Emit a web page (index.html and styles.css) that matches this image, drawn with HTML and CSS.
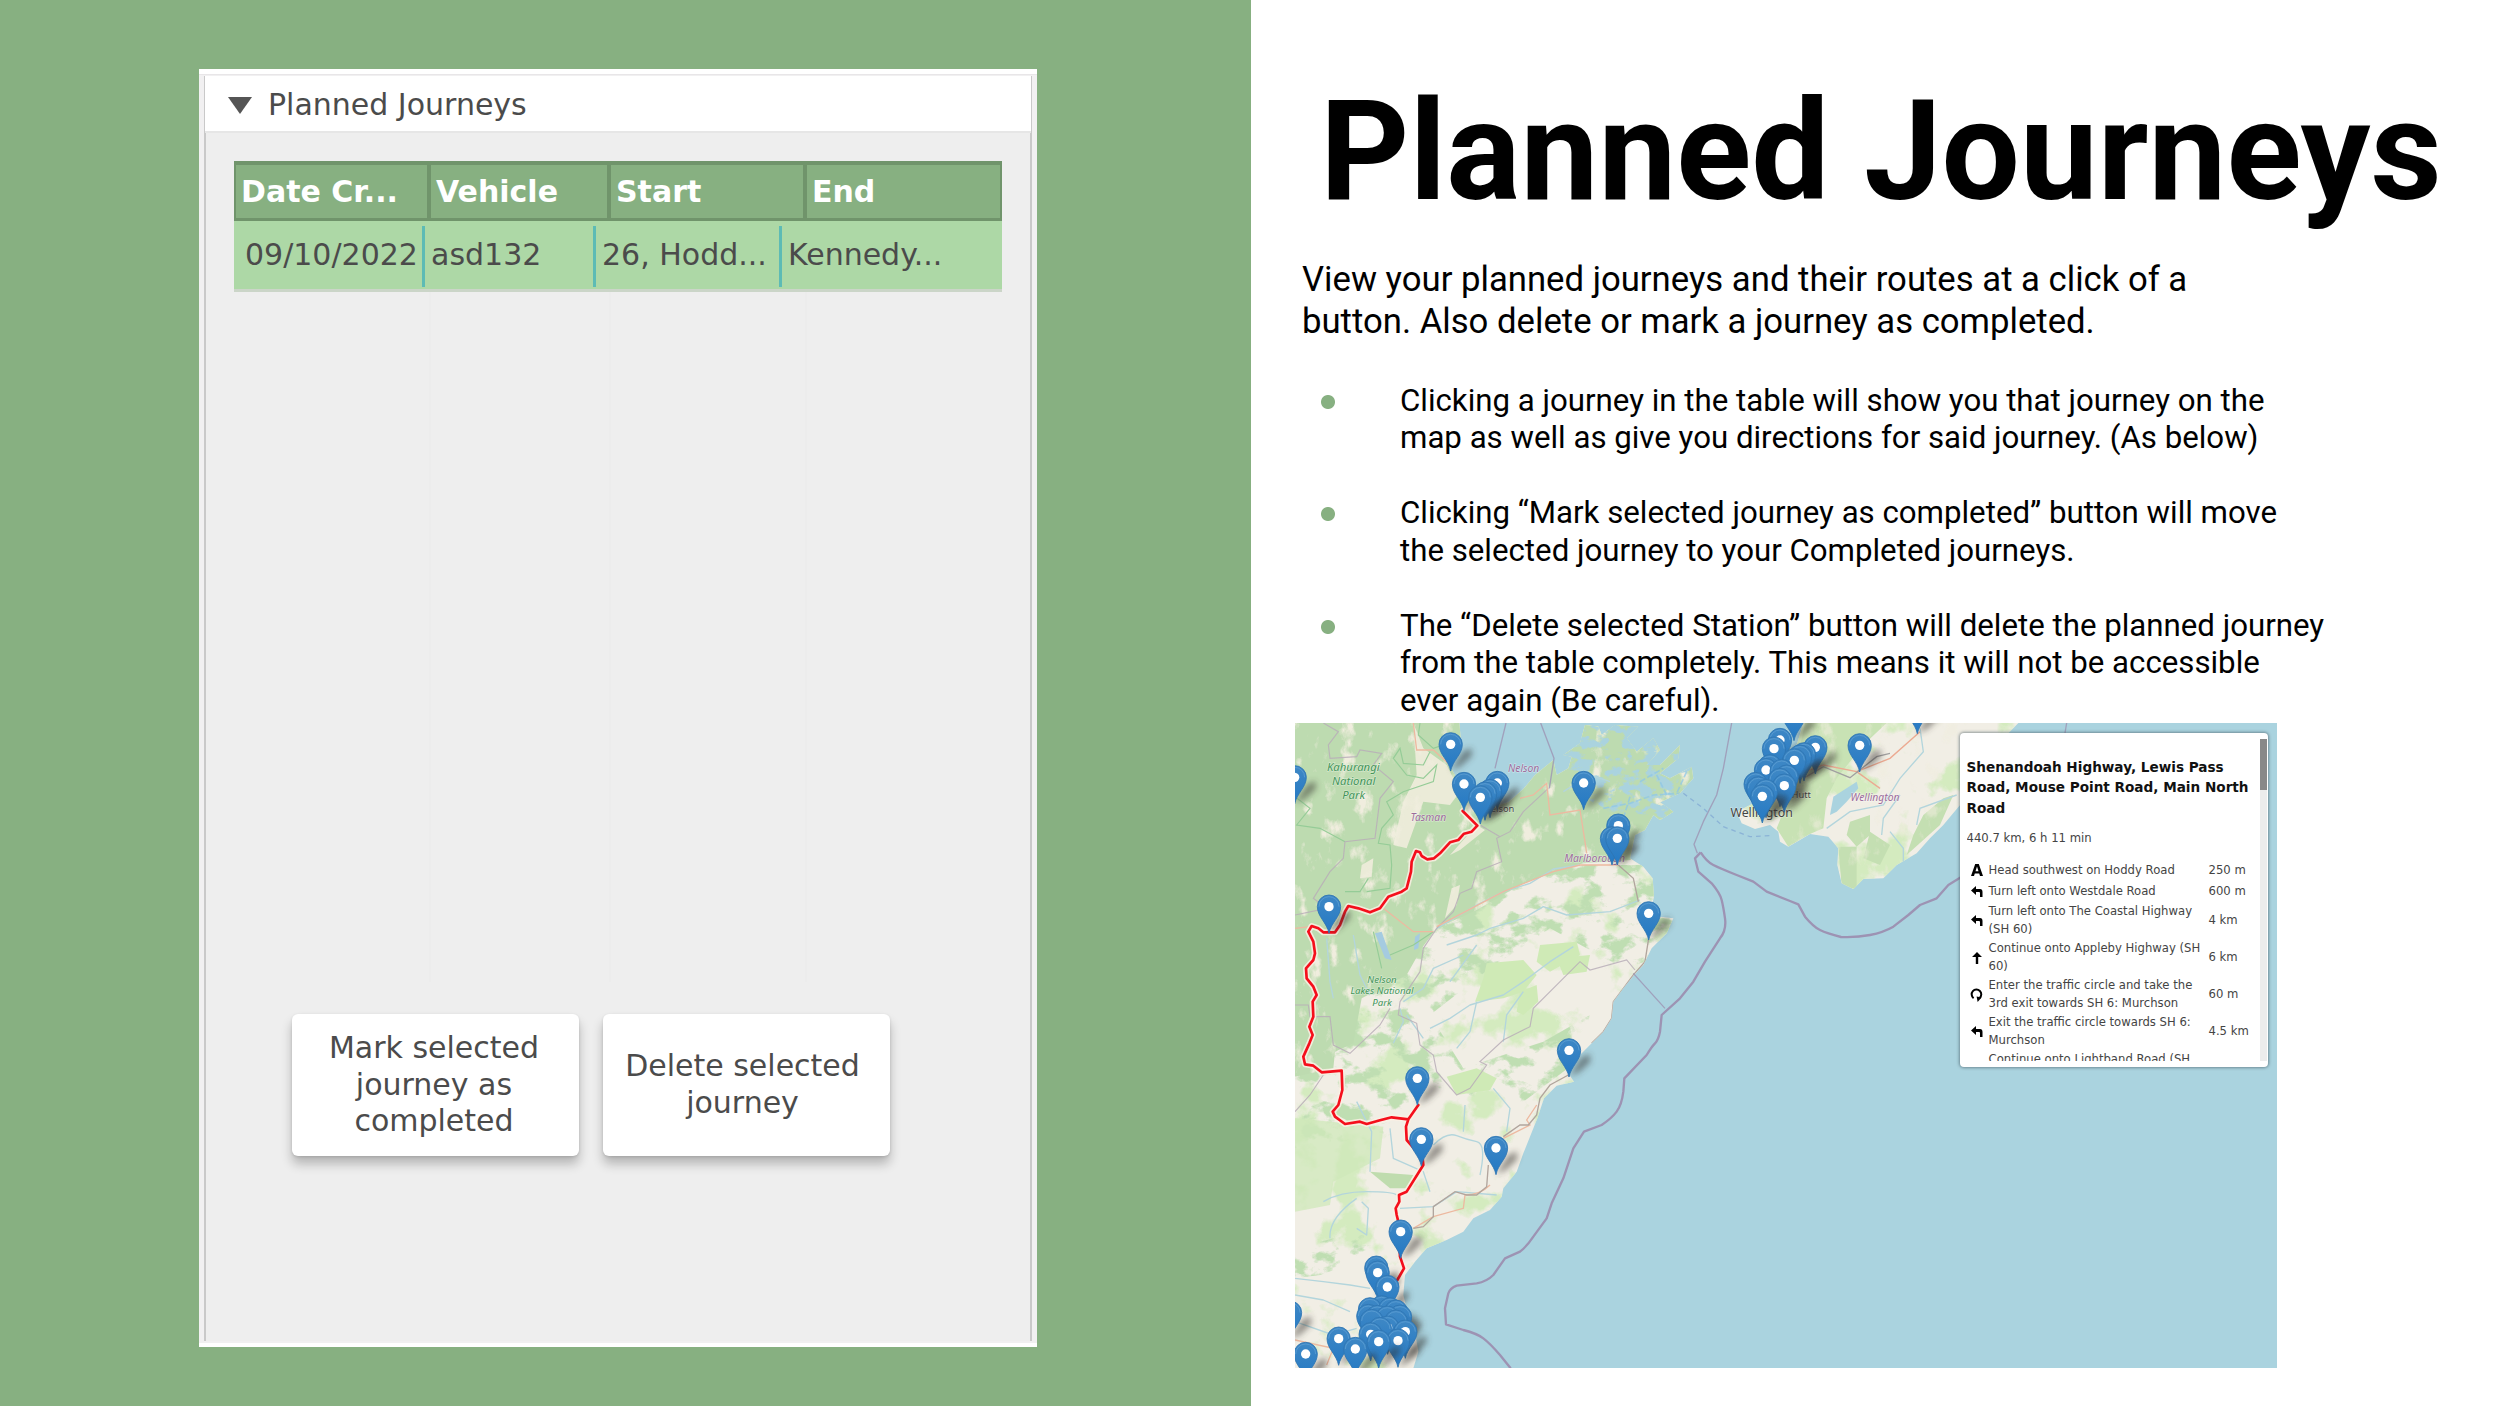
FILE: index.html
```html
<!DOCTYPE html>
<html lang="en">
<head>
<meta charset="utf-8">
<title>Planned Journeys</title>
<link rel="stylesheet" href="styles.css">
</head>
<body>
<main class="slide">
  <section class="left">
    <div class="panel">
      <div class="panel-inner">
        <header class="panel-head"><span class="caret"></span>Planned Journeys</header>
        <div class="panel-body">
          <div class="table">
            <div class="thead"><span>Date Cr...</span><span>Vehicle</span><span>Start</span><span>End</span></div>
            <div class="trow"><span>09/10/2022</span><span>asd132</span><span>26, Hodd...</span><span>Kennedy...</span></div>
            <div class="tempty"><i></i><i></i><i></i><i></i></div>
          </div>
          <div class="buttons">
            <button>Mark selected<br>journey as<br>completed</button>
            <button>Delete selected<br>journey</button>
          </div>
        </div>
      </div>
    </div>
  </section>
  <section class="right">
    <h1>Planned Journeys</h1>
    <p class="lead">View your planned journeys and their routes at a click of a<br>button. Also delete or mark a journey as completed.</p>
    <ul class="points">
      <li>Clicking a journey in the table will show you that journey on the<br>map as well as give you directions for said journey. (As below)</li>
      <li>Clicking “Mark selected journey as completed” button will move<br>the selected journey to your Completed journeys.</li>
      <li>The “Delete selected Station” button will delete the planned journey<br>from the table completely. This means it will not be accessible<br>ever again (Be careful).</li>
    </ul>
    <div class="map">
      <svg class="map-art" viewBox="15 24 2946 1935" preserveAspectRatio="none">
        <defs>
          <path id="south" d="M15 24H508L512 70 490 100 478 150 500 190 540 225 570 262 610 275 655 262 700 222 735 180 790 135 800 180 835 160 845 125 820 120 870 85 885 30 925 35 935 60 975 30 1045 35 1010 70 1040 110 1090 70 1110 105 1070 150 1110 150 1170 90 1165 130 1110 175 1140 190 1205 155 1210 190 1170 235 1110 262 1150 290 1110 315 1090 300 1065 345 1035 360 1020 430 1060 455 1088 490 1092 545 1085 575 1110 605 1150 610 1130 655 1085 700 1060 750 1032 780 1000 820 970 860 965 910 940 950 905 985 870 1020 835 1075 852 1100 800 1112 762 1150 742 1210 722 1260 700 1315 680 1370 640 1420 635 1445 600 1485 550 1510 520 1550 470 1575 410 1600 375 1640 345 1680 340 1740 352 1790 375 1850 385 1910 370 1960H15Z"/>
          <path id="north" d="M1540 24 1520 90 1480 140 1430 200 1400 260 1340 290 1355 325 1395 342 1440 330 1465 350 1470 380 1495 395 1560 357 1615 365 1645 400 1642 450 1655 505 1690 522 1720 492 1780 490 1820 450 1880 415 1920 370 1960 330 2010 270 2060 180 2150 60 2185 24Z"/>
          <clipPath id="cs"><use href="#south"/></clipPath>
          <clipPath id="cn"><use href="#north"/></clipPath>
          <clipPath id="forestClip"><path d="M15 24H1210V300L1020 435 880 445 790 470 690 510 560 585 440 640 395 700 350 780 215 850 190 985 135 1010 130 1060 15 1085Z"/></clipPath>
          <filter id="cream" x="0" y="0" width="100%" height="100%" color-interpolation-filters="sRGB"><feTurbulence type="fractalNoise" baseFrequency=".02 .013" numOctaves="5" seed="4"/><feColorMatrix values="0 0 0 0 .94  0 0 0 0 .93  0 0 0 0 .87  5 0 0 0 -2.95"/><feComposite in2="SourceGraphic" operator="in"/></filter>
          <filter id="green" x="0" y="0" width="100%" height="100%" color-interpolation-filters="sRGB"><feTurbulence type="fractalNoise" baseFrequency=".014 .018" numOctaves="5" seed="11"/><feColorMatrix values="0 0 0 0 .75  0 0 0 0 .87  0 0 0 0 .70  8 0 0 0 -4.1"/><feComposite in2="SourceGraphic" operator="in"/></filter>
          <filter id="lime" x="0" y="0" width="100%" height="100%" color-interpolation-filters="sRGB"><feTurbulence type="fractalNoise" baseFrequency=".008" numOctaves="5" seed="27"/><feColorMatrix values="0 0 0 0 .83  0 0 0 0 .92  0 0 0 0 .75  8 0 0 0 -4.4"/><feComposite in2="SourceGraphic" operator="in"/></filter>
          <filter id="shoal" x="0" y="0" width="100%" height="100%" color-interpolation-filters="sRGB"><feTurbulence type="fractalNoise" baseFrequency=".02 .03" numOctaves="4" seed="9"/><feColorMatrix values="0 0 0 0 .667  0 0 0 0 .827  0 0 0 0 .875  10 0 0 0 -4.9"/><feComposite in2="SourceGraphic" operator="in"/></filter>
          <filter id="soft" x="-60%" y="-60%" width="220%" height="220%"><feGaussianBlur stdDeviation="9"/></filter>
          <linearGradient id="pg" x1="0" y1="0" x2="0" y2="1"><stop offset="0" stop-color="#3f88c5"/><stop offset="1" stop-color="#2479c4"/></linearGradient>
          <g id="blank">
            <path d="M0 78 36 22 62 10 64 34 30 66Z" fill="#332e2a" opacity=".5" filter="url(#soft)"/>
            <path d="M0 80C-6 48-35 30-35 0A35 35 0 0 1 35 0C35 30 6 48 0 80Z" fill="url(#pg)" stroke="#2e75b2" stroke-width="2.5"/>
            <path d="M-30 0A30 30 0 0 1 30 0" fill="none" stroke="#5c9dd2" stroke-width="2.5"/>
          </g>
          <g id="pin"><use href="#blank"/><circle r="14" fill="#fff"/></g>
          <path id="route" d="M518 288 562 332 545 350 522 356 505 375 480 382 450 415 432 430 412 433 395 423 390 412 378 408 365 440 363 470 350 520 335 530 295 545 270 580 240 592 205 580 175 573 165 590 150 630 135 652 100 652 85 640 65 633 55 650 70 680 75 715 70 735 48 760 50 790 70 815 80 840 68 860 70 905 58 935 68 960 58 985 40 1025 45 1048 70 1052 95 1072 155 1067 157 1125 145 1170 128 1190 135 1205 165 1227 210 1220 230 1227 270 1216 305 1207 355 1213 385 1170M355 1213 348 1235 350 1275 398 1330 400 1350 350 1430 327 1440 328 1460 317 1480 320 1500 325 1520 330 1625 342 1660 322 1695"/>
        </defs>
        <rect x="15" y="24" width="2946" height="1935" fill="#aad3df"/>
        <use href="#south" fill="#f1eee5"/>
        <use href="#north" fill="#f1eee5"/>
        <g clip-path="url(#cs)">
          <rect x="15" y="24" width="1200" height="1935" filter="url(#lime)"/>
          <path d="M15 450H1200V700L1000 760 780 640 600 760 420 900 520 1060 760 980 900 900 860 1040 700 1160 430 1130 300 1200 300 1260 15 1300Z" filter="url(#green)"/>
          <path d="M15 1210 280 1235 270 1330 130 1400 120 1470 15 1490Z" fill="#cfe8b9" opacity=".75"/>
          <path d="M15 1600 130 1570 220 1560 260 1600 200 1640 90 1680 15 1690Z" fill="#c7e3b4" filter="url(#green)"/>
          <path d="M590 745 700 735 740 780 700 830 640 850 555 860 580 790ZM750 690 860 680 870 720 780 770 740 740ZM800 730 900 720 890 770 820 780ZM690 830 740 810 745 860 700 900 680 890ZM470 1085 560 1060 620 1090 600 1125 500 1140Z" fill="#cfeab6"/>
          <g clip-path="url(#forestClip)">
            <rect x="15" y="24" width="1200" height="1080" fill="#bddbb0"/>
            <path d="M370 24 400 100 470 150 510 230 480 270 400 260 350 400 310 390 340 260 380 180ZM560 330 585 345 510 405 480 420ZM215 450 250 430 245 485 210 490ZM485 520 510 510 500 570 465 610Z" fill="#ebebd8"/>
            <rect x="15" y="24" width="1200" height="1080" filter="url(#cream)"/>
            <path d="M790 24H1215V330L1080 300 960 290 800 200Z" filter="url(#shoal)"/>
          </g>
          <path d="M240 1370 370 1380 350 1420 300 1420Z" fill="#bfdcae"/>
          <path d="M255 655 275 650 305 735 285 730ZM375 665 390 655 385 700 372 705Z" fill="#a5cbe0"/>
          <g fill="none" stroke="#b3d5dc" stroke-width="4" stroke-linejoin="round">
            <path d="M440 640 560 570 640 530 720 505 790 462 870 450"/>
            <path d="M470 690 560 660 600 640 700 610 760 575 830 600 960 590 1050 555M480 800 560 690M340 860 400 820 430 760 520 720M560 860 540 950 500 1000M420 940 480 910 540 870 640 840 700 800 780 740 850 695M640 980 650 900 700 830M330 880 340 920 310 985M350 900 400 970"/>
            <path d="M240 1370 245 1250 200 1160M300 1240 310 1330 400 1370 420 1430M430 1290 Q470 1250 500 1262T560 1280 570 1380M525 1170 520 1250M330 1480 430 1475 500 1430 620 1440M100 1460 Q150 1430 230 1430T320 1440M120 1570 Q115 1510 200 1450M215 1460 235 1480 230 1560 200 1540M15 1690 100 1700 180 1710 240 1720M15 1740 100 1755 180 1790M15 1820 130 1860 200 1840M610 1120 660 1180 650 1250"/>
            <path d="M110 670 120 800 130 850M190 660 210 780 240 840M700 180 710 210M820 230 900 180 960 200"/>
          </g>
          <g fill="none" stroke="#95cc97" stroke-width="3.5"><path d="M420 110 400 150 340 145 330 100 310 130 350 180 400 190 440 150 430 200 340 230 290 260 310 300 275 340 265 385 300 390 305 450 300 520 230 530 M15 245 60 280 20 330 90 340 165 380M390 24 385 60 430 100 490 80M235 490 210 530 165 530M250 650 275 760M300 720 370 690 430 650"/></g>
          <g fill="none" stroke="#8fc7e5" stroke-width="5" stroke-dasharray="18 7" opacity=".75"><path d="M940 280 1020 265 1090 240 1170 235M1020 245 1000 310M1050 200 1120 160M1130 240 1100 180M1190 170 1160 235"/></g>
          <g fill="none" stroke="#b9aeb8" stroke-width="3.5" opacity=".85">
            <path d="M100 24 145 50 115 90 120 130 200 125 210 105 275 115 250 150 310 200 270 250 255 370 165 380 160 430 120 470 70 550 110 580 15 600"/>
            <path d="M775 220 700 290 660 350 620 370 635 440 560 470 545 520 510 535 490 590 440 640 400 700 390 770 330 860 325 900 380 925 390 990 430 1020 440 1070 500 1140 540 1120 590 1050 570 1040 640 975 720 935 730 880 870 740 900 765 1010 735 1035 765"/>
            <path d="M570 330 630 365M15 870 55 870 60 905 120 905 130 990 180 1015 270 930 300 880M15 1190 60 1140 100 1080"/>
          </g>
          <g fill="none" stroke="#edb9a0" stroke-width="4">
            <path d="M370 24 380 105 430 105 480 150M690 250 730 240 770 205 780 300 870 285 885 380 890 415M985 450 870 450 790 470 640 530 440 635M280 580 370 650 430 650M15 640 60 635M15 1875 130 1900 110 1950"/>
            <path d="M740 1170 710 1215 720 1230 640 1270M600 1410 Q570 1440 525 1440 L520 1480 430 1505 370 1540"/>
          </g>
          <path d="M985 450 1030 490 1045 560M1076 670 1065 740 1030 780 1000 820 970 860 965 910 940 950 905 985M835 1080 780 1110 750 1150 740 1200 715 1230 690 1230 640 1265M595 1350 590 1415 560 1440 530 1440 495 1430 430 1475 430 1505 400 1535 370 1540" fill="none" stroke="#b1a59d" stroke-width="4"/>
        </g>
        <g clip-path="url(#cn)">
          <rect x="1300" y="24" width="900" height="500" filter="url(#lime)"/>
          <path d="M1545 24 1790 24 1720 90 1640 190 1610 250 1600 340 1560 357 1495 395 1460 340 1500 240Z" fill="#c8e2b4"/>
          <path d="M1645 395 1700 395 1700 522 1655 515ZM1680 320 1740 300 1740 360 1700 395 1670 360ZM1900 300 1960 250 1990 240 1950 330 1850 420 1870 360ZM1740 350 1800 390 1770 450 1720 430Z" fill="#c4dfb2"/>
          <rect x="1500" y="24" width="650" height="450" filter="url(#cream)" opacity=".6"/>
          <path d="M1620 300 1630 245 1700 200 1705 220 1670 260 1640 290Z" fill="#aad3df"/>
          <g fill="none" stroke="#b3d5dc" stroke-width="4"><path d="M1610 340 1680 290 1780 270 1830 190 1900 110 1890 40M1775 360 1780 310 1830 240M1880 330 1890 280 2000 240M1800 350 1840 400 1840 440"/></g>
          <path d="M1520 180 1600 150 1700 170 1770 220M1700 170 1800 130 1890 50" fill="none" stroke="#ecaa92" stroke-width="4"/>
          <path d="M1540 190 1600 155 1680 188 1760 125 1800 115" fill="none" stroke="#a1a0a0" stroke-width="4"/>
        </g>
        <g fill="none" stroke="#9d93b3" stroke-linejoin="round">
          <path d="M648 24 615 160M752 24 792 130 778 220M1325 24 1300 160 1280 240 1240 320 1212 388 1222 415M1030 775 1125 880M2330 24 2324 60" stroke-width="4" opacity=".8"/>
          <path d="M1232 412 1215 430 1225 470 1265 505Q1290 535 1295 555T1305 610 1290 670L1245 740 1210 800 1170 850 1115 900 1110 950Q1105 975 1095 985T1070 1020L1003 1090 1000 1130Q995 1170 980 1190T935 1230L882 1250 850 1300 820 1390 785 1465 770 1510 730 1565Q710 1595 690 1610L645 1630 610 1680Q590 1700 560 1705L500 1712Q480 1720 475 1735L465 1780 468 1828 520 1845Q560 1855 580 1870T630 1920L662 1960M1232 412Q1250 440 1270 450T1340 480L1390 500 1430 530 1500 558 1525 568 1545 605Q1570 635 1590 645T1653 666Q1700 668 1740 660T1810 635L1855 600 1890 570 1940 550 1975 510 2015 485" stroke-width="7"/>
          <path d="M1180 235 1240 280 1300 335 1380 365 1440 362" stroke="#8bb3d6" stroke-width="4" stroke-dasharray="14 12"/>
        </g>
        <g class="places">
          <g fill="#429458" font-size="34"><text x="190" y="167">Kahurangi</text><text x="191" y="209">National</text><text x="191" y="251">Park</text></g>
          <g fill="#429458" font-size="29"><text x="276" y="803">Nelson</text><text x="276" y="838">Lakes National</text><text x="276" y="872">Park</text></g>
          <g fill="#9c6c9b" font-size="31"><text x="701" y="170">Nelson</text><text x="415" y="318">Tasman</text><text x="914" y="442">Marlborough</text><text x="1755" y="258">Wellington</text></g>
          <g class="town" fill="#444"><text x="627" y="291" font-size="28">Nelson</text><text x="1415" y="307" font-size="37">Wellington</text><text x="1490" y="249" font-size="28">Lower Hutt</text></g>
        </g>
        <g fill="none" stroke-linejoin="round" stroke-linecap="round">
          <use href="#route" stroke="#faf0e4" stroke-width="18" opacity=".85"/>
          <use href="#route" stroke="#f50f1c" stroke-width="8"/>
        </g>
        <g>
          <use href="#pin" x="482" y="88"/><use href="#pin" x="14" y="187"/><use href="#pin" x="622" y="204"/><use href="#pin" x="881" y="204"/><use href="#pin" x="522" y="207"/><use href="#blank" x="600" y="228"/><use href="#blank" x="585" y="236"/><use href="#pin" x="571" y="247"/>
          <use href="#pin" x="985" y="332"/><use href="#blank" x="966" y="370"/><use href="#pin" x="982" y="370"/><use href="#pin" x="117" y="575"/><use href="#pin" x="1076" y="595"/>
          <use href="#blank" x="1512" y="-3"/><use href="#blank" x="1882" y="-24"/><use href="#pin" x="1709" y="91"/>
          <use href="#pin" x="1470" y="75"/><use href="#pin" x="1576" y="97"/><use href="#pin" x="1452" y="101"/><use href="#blank" x="1542" y="118"/><use href="#blank" x="1530" y="125"/><use href="#pin" x="1513" y="136"/><use href="#blank" x="1440" y="154"/><use href="#pin" x="1428" y="165"/><use href="#blank" x="1475" y="168"/><use href="#blank" x="1490" y="185"/><use href="#blank" x="1470" y="195"/><use href="#blank" x="1397" y="207"/><use href="#pin" x="1483" y="212"/><use href="#blank" x="1405" y="220"/><use href="#blank" x="1428" y="228"/><use href="#pin" x="1417" y="244"/>
          <use href="#pin" x="837" y="1006"/><use href="#pin" x="382" y="1090"/><use href="#pin" x="394" y="1273"/><use href="#pin" x="618" y="1299"/><use href="#pin" x="332" y="1550"/><use href="#blank" x="259" y="1658"/><use href="#pin" x="263" y="1673"/><use href="#pin" x="292" y="1716"/>
          <use href="#blank" x="0" y="1793"/><use href="#blank" x="275" y="1777"/><use href="#blank" x="240" y="1783"/><use href="#blank" x="300" y="1783"/><use href="#blank" x="318" y="1790"/><use href="#blank" x="235" y="1803"/><use href="#blank" x="330" y="1805"/><use href="#blank" x="262" y="1806"/><use href="#blank" x="292" y="1808"/><use href="#blank" x="245" y="1818"/><use href="#blank" x="318" y="1820"/><use href="#pin" x="293" y="1838"/><use href="#blank" x="270" y="1842"/><use href="#pin" x="346" y="1850"/><use href="#pin" x="242" y="1858"/><use href="#pin" x="146" y="1871"/><use href="#pin" x="324" y="1877"/><use href="#pin" x="266" y="1880"/><use href="#pin" x="196" y="1902"/><use href="#pin" x="47" y="1917"/>
        </g>
      </svg>
      <aside class="directions">
        <div class="scroll">
          <h2>Shenandoah Highway, Lewis Pass<br>Road, Mouse Point Road, Main North<br>Road</h2>
          <h3>440.7 km, 6 h 11 min</h3>
          <div class="step"><svg viewBox="0 0 12 12"><path fill-rule="evenodd" d="M0 12 4.2 0H7.8L12 12H9L8.2 9.4H3.8L3 12ZM4.5 7.2H7.5L6 2.4Z"/></svg><span>Head southwest on Hoddy Road</span><b>250 m</b></div>
          <div class="step"><svg viewBox="0 0 12 12"><path d="M0 4.5 5 0V3H9Q11.5 3 11.5 6V11H9V7Q9 6 8 6H5V9Z"/></svg><span>Turn left onto Westdale Road</span><b>600 m</b></div>
          <div class="step"><svg viewBox="0 0 12 12"><path d="M0 4.5 5 0V3H9Q11.5 3 11.5 6V11H9V7Q9 6 8 6H5V9Z"/></svg><span>Turn left onto The Coastal Highway<br>(SH 60)</span><b>4 km</b></div>
          <div class="step"><svg viewBox="0 0 12 12"><path d="M6 0 11 5H7.2V12H4.8V5H1Z"/></svg><span>Continue onto Appleby Highway (SH<br>60)</span><b>6 km</b></div>
          <div class="step"><svg viewBox="0 0 12 12"><path d="M2.6 9.2A4.8 4.8 0 1 1 8.6 9" fill="none" stroke="#000" stroke-width="2"/><path d="M5.6 7.4 10.6 8.4 6.6 13Z"/></svg><span>Enter the traffic circle and take the<br>3rd exit towards SH 6: Murchson</span><b>60 m</b></div>
          <div class="step"><svg viewBox="0 0 12 12"><path d="M0 4.5 5 0V3H9Q11.5 3 11.5 6V11H9V7Q9 6 8 6H5V9Z"/></svg><span>Exit the traffic circle towards SH 6:<br>Murchson</span><b>4.5 km</b></div>
          <div class="step last"><svg viewBox="0 0 12 12"><path d="M6 0 11 5H7.2V12H4.8V5H1Z"/></svg><span>Continue onto Lightband Road (SH</span></div>
        </div>
        <div class="track"><div class="thumb"></div></div>
      </aside>
    </div>
  </section>
</main>
</body>
</html>
```
FILE: styles.css
```css
* { box-sizing: border-box; }
body { margin: 0; background: #fff; }
.slide { display: flex; width: 2500px; height: 1406px; overflow: hidden; }

.left { flex: none; width: 1251px; background: #87b081; padding: 69px 0 0 199px; }
.panel { width: 838px; height: 1278px; background: #f1f0f1; padding: 2px 5px 6px; border-top: 5px solid #fff; border-bottom: 4px solid #fff; box-shadow: inset 0 1px #e8e6e8; font: 30px/36.7px "DejaVu Sans", sans-serif; color: #4b4b4b; }
.panel-inner { height: 1265px; border: 2px solid #c9c9c9; border-top: 0; border-bottom: 0; background: #eee; }
.panel-head { height: 57px; margin: 0 -1px; background: #fff; border-bottom: 2px solid #e6e6e6; display: flex; align-items: center; padding: 4px 0 0 23px; }
.caret { width: 24px; height: 17px; background: #555; clip-path: polygon(0 0, 100% 0, 50% 100%); margin-right: 16px; }
.panel-body { padding: 28px 28px 0; }
.table { width: 768px; }
.thead { display: grid; grid-template-columns: 191px 180px 196px 197px; height: 60px; background: #87b081; border: 3px solid #70946b; border-width: 4px 2px 3px; color: #fff; font-weight: bold; line-height: 54px; }
.thead span { padding-left: 5px; white-space: nowrap; }
.thead span + span { border-left: 4px solid #70946b; }
.trow { display: grid; grid-template-columns: 188px 171px 186px 223px; height: 71px; background: #add8a6; padding-top: 5px; border-bottom: 3px solid #cbd5c8; line-height: 57px; white-space: nowrap; }
.trow span { height: 61px; padding-left: 6px; }
.trow span:first-child { padding-left: 11px; }
.trow span + span { border-left: 3px solid #5dbbb5; }
.tempty { display: grid; grid-template-columns: 195px 180px 196px 197px; height: 690px; margin-bottom: 10px; }
.tempty i + i { border-left: 2px solid #ececec; }
.buttons { display: flex; gap: 24px; padding: 22px 0 0 58px; }
.buttons button { width: 287px; height: 142px; border: 0; border-radius: 6px; padding: 0 3px 0 0; background: #fff; color: #4b4b4b; font: inherit; box-shadow: 0 8px 11px rgba(0,0,0,.24), 0 1px 3px rgba(0,0,0,.12); }
.buttons button + button { padding-right: 8px; }

.right { flex: none; width: 1249px; padding-top: 69px; font-family: Roboto, sans-serif; color: #000; }
h1 { margin: 0 0 23.3px 69px; font-size: 138.9px; line-height: 166.7px; font-weight: 700; white-space: nowrap; }
.lead { margin: 0 0 39.2px 51px; font-size: 34.7px; line-height: 41.67px; white-space: nowrap; }
.points { list-style: none; margin: 0; padding: 0 0 0 70px; display: grid; gap: 37.5px; font-size: 31.22px; line-height: 37.5px; white-space: nowrap; }
.points li { padding-left: 79px; background: radial-gradient(circle 7.5px at 7px 20px, #87b081 6.5px, transparent 7.5px); }

.map { position: relative; width: 983px; height: 645px; margin: 4px 0 0 44px; overflow: hidden; }
.map-art { display: block; width: 982px; height: 645px; }
.places { font-family: "Noto Sans", sans-serif; font-style: italic; text-anchor: middle; paint-order: stroke; stroke: rgba(255,255,255,.5); stroke-width: 3px; }
.town { font-style: normal; }
.directions { position: absolute; left: 664.5px; top: 10px; width: 308.5px; height: 334px; display: flex; background: #fff; border-radius: 4px; box-shadow: 0 0 3px 1px rgba(60,80,90,.55); padding: 6px 1px 6px 7px; font: 11.65px/17.5px "DejaVu Sans", sans-serif; color: #444; }
.scroll { flex: none; width: 293px; height: 322px; overflow: hidden; white-space: nowrap; }
h2 { margin: 18px 0 10px; font-size: 13.6px; line-height: 20.4px; font-weight: bold; color: #111; }
h3 { margin: 0 0 11.5px; font-size: 11.65px; line-height: 20px; font-weight: normal; }
.step { display: grid; grid-template-columns: 22px 220px 1fr; align-items: center; min-height: 21.3px; padding: 1px 0; }
.step svg { width: 12px; height: 12px; margin-left: 4px; overflow: visible; }
.step b { font-weight: normal; }
.last { align-items: start; }
.last svg { margin-top: 11px; }
.track { width: 8px; height: 322px; background: #ececec; }
.thumb { height: 51px; background: #888; }
```
